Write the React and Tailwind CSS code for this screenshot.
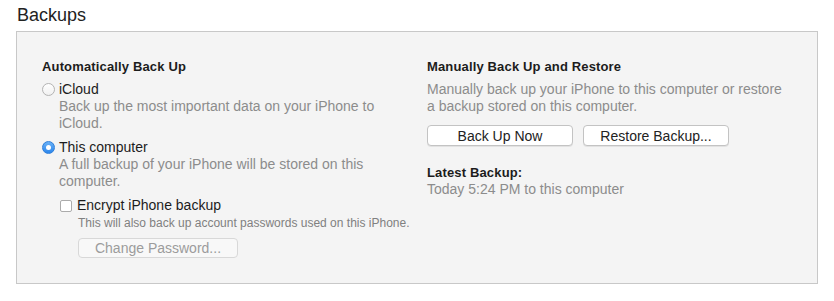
import React from "react";

const Radio = ({ checked, label }) => (
  <div className="flex items-center gap-[4px] leading-[17px] text-[#1c1c1c]">
    {checked ? (
      <span className="flex items-center justify-center w-[13px] h-[13px] rounded-full border border-[#2f7fd9] bg-gradient-to-b from-[#69b1f7] to-[#2a86ec]">
        <span className="w-[5px] h-[5px] rounded-full bg-white" />
      </span>
    ) : (
      <span className="w-[13px] h-[13px] rounded-full border border-[#b3b3b3] bg-gradient-to-b from-white to-[#f0f0f0]" />
    )}
    <span>{label}</span>
  </div>
);

const MacButton = ({ children, disabled, className = "" }) => (
  <button
    type="button"
    className={
      "flex items-center justify-center rounded-[4px] border text-[14px] leading-none " +
      (disabled
        ? "bg-[#f8f8f8] border-[#d8d8d8] text-[#9c9c9c] "
        : "bg-white border-[#c3c3c3] text-[#222] shadow-[0_1px_0_rgba(0,0,0,0.07)] ") +
      className
    }
  >
    {children}
  </button>
);

const App = () => {
  return (
    <div className="w-[834px] h-[301px] bg-white font-['Liberation_Sans',Arial,sans-serif]">
      <div className="pl-[17px] pt-[4px] text-[18px] leading-[22px] text-[#222]">
        Backups
      </div>

      <div className="ml-[16px] mt-[5px] w-[802px] h-[253px] border border-[#c8c8c8] bg-[#f4f4f4] pl-[25px] pt-[26px] grid grid-cols-[385px_1fr] text-[14px]">
        {/* automatic */}
        <div className="flex flex-col">
          <div className="font-bold text-[13px] tracking-[0.15px] leading-[17px] text-[#1c1c1c]">
            Automatically Back Up
          </div>

          <div className="mt-[6px]">
            <Radio label="iCloud" />
            <p className="pl-[17px] w-[357px] leading-[17px] text-[#8c8c8c]">
              Back up the most important data on your iPhone to iCloud.
            </p>
          </div>

          <div className="mt-[7px]">
            <Radio checked label="This computer" />
            <p className="pl-[17px] w-[357px] leading-[17px] text-[#8c8c8c]">
              A full backup of your iPhone will be stored on this computer.
            </p>
          </div>

          <div className="mt-[7px] pl-[18px] flex items-center gap-[5px] leading-[17px] text-[#1c1c1c]">
            <span className="w-[12px] h-[12px] rounded-[2px] border border-[#ababab] bg-white" />
            <span>Encrypt iPhone backup</span>
          </div>
          <p className="mt-[2px] pl-[36px] text-[12px] leading-[14px] text-[#808080]">
            This will also back up account passwords used on this iPhone.
          </p>
          <MacButton disabled className="ml-[36px] mt-[8px] w-[160px] h-[20px]">
            Change Password...
          </MacButton>
        </div>

        {/* manual */}
        <div className="flex flex-col">
          <div className="font-bold text-[13px] tracking-[0.15px] leading-[17px] text-[#1c1c1c]">
            Manually Back Up and Restore
          </div>
          <p className="mt-[6px] w-[360px] leading-[17px] text-[#8c8c8c]">
            Manually back up your iPhone to this computer or restore a backup
            stored on this computer.
          </p>
          <div className="mt-[10px] flex gap-[10px]">
            <MacButton className="w-[146px] h-[21px]">Back Up Now</MacButton>
            <MacButton className="w-[146px] h-[21px]">Restore Backup...</MacButton>
          </div>
          <div className="mt-[19px] font-bold text-[13px] tracking-[0.15px] leading-[16px] text-[#1c1c1c]">
            Latest Backup:
          </div>
          <div className="leading-[16px] text-[#8c8c8c]">
            Today 5:24 PM to this computer
          </div>
        </div>
      </div>
    </div>
  );
};

export default App;
